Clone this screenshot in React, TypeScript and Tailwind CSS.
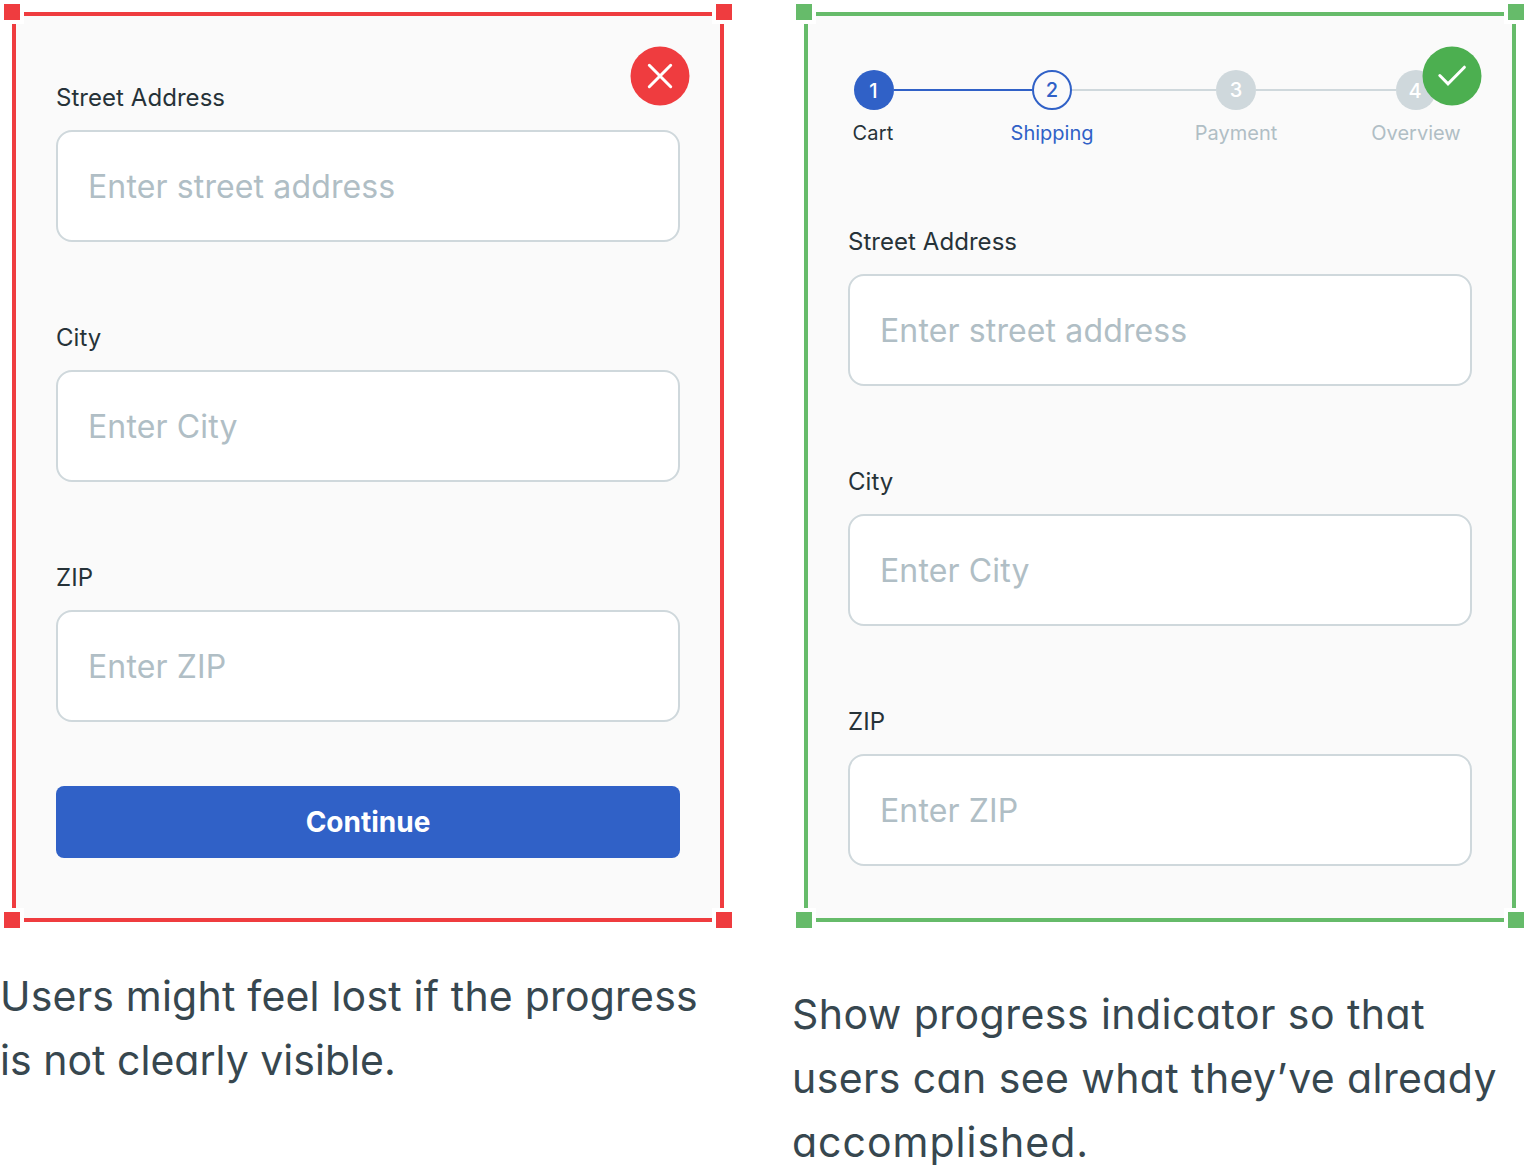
import React from "react";
import { clsx } from "clsx";

type Tone = "bad" | "good";

const fields = [
  { label: "Street Address", placeholder: "Enter street address" },
  { label: "City", placeholder: "Enter City" },
  { label: "ZIP", placeholder: "Enter ZIP" },
];

const handles = ["left-0 top-0", "right-0 top-0", "left-0 bottom-0", "right-0 bottom-0"];

function Frame({ tone, children }: { tone: Tone; children: React.ReactNode }) {
  return (
    <div className="relative h-[932px] w-[736px] px-3 pt-3 pb-2.5">
      <div
        className={clsx(
          "h-full border-4 bg-[#fafafa] px-10",
          tone === "bad" ? "border-[#ef3c3f]" : "border-[#66bb6a]"
        )}
      >
        {children}
      </div>
      {/* Resize handles on the corners */}
      {handles.map((pos) => (
        <span
          key={pos}
          className={clsx(
            "absolute size-6 border-4 border-white",
            pos,
            tone === "bad" ? "bg-[#ef3c3f]" : "bg-[#66bb6a]"
          )}
        />
      ))}
      <Badge tone={tone} />
    </div>
  );
}

function Badge({ tone }: { tone: Tone }) {
  return (
    <svg className="absolute left-[630px] top-[46px] size-[60px]" viewBox="0 0 60 60" fill="none">
      <circle cx="30" cy="30" r="29.5" fill={tone === "bad" ? "#ef3c3f" : "#4caf50"} />
      <path
        d={tone === "bad" ? "M19.3 19.3L40.7 40.7M40.7 19.3L19.3 40.7" : "M17.8 29.5L26 37.8L42.4 21.2"}
        stroke="white"
        strokeWidth="3"
        strokeLinecap="round"
      />
    </svg>
  );
}

function AddressForm() {
  return (
    <div className="flex flex-col gap-20">
      {fields.map((f) => (
        <label key={f.label} className="flex flex-col gap-4">
          <span className="h-8 text-2xl leading-8 tracking-[0.05px] text-[#263238]">{f.label}</span>
          <input
            className="h-28 w-full rounded-2xl border-2 border-[#cfd8dc] bg-white px-[30px] text-[32px] tracking-[0.13px] placeholder:text-[#b0bec5] placeholder:opacity-100"
            placeholder={f.placeholder}
          />
        </label>
      ))}
    </div>
  );
}

function Step({ n, label, circle, text }: { n: number; label: string; circle: string; text: string }) {
  return (
    <div className="flex w-10 shrink-0 flex-col items-center">
      <div className={clsx("flex size-10 items-center justify-center rounded-full text-xl font-medium", circle)}>{n}</div>
      <div className={clsx("mt-2 whitespace-nowrap text-xl leading-7.5", text)}>{label}</div>
    </div>
  );
}

function Stepper() {
  return (
    <div className="flex pl-1.5">
      <Step n={1} label="Cart" circle="bg-[#3061c7] pt-0.5 pr-px text-white" text="mr-0.5 tracking-[0.2px] text-[#263238]" />
      <div className="mt-[19px] h-0.5 w-[138px] bg-[#3061c7]" />
      <Step n={2} label="Shipping" circle="border-2 border-[#3061c7] text-[#3061c7]" text="text-[#3061c7]" />
      <div className="mt-[19px] h-0.5 w-36 bg-[#cfd8dc]" />
      <Step n={3} label="Payment" circle="bg-[#cfd8dc] text-white" text="text-[#b0bec5]" />
      <div className="mt-[19px] h-0.5 w-[140px] bg-[#cfd8dc]" />
      <Step n={4} label="Overview" circle="bg-[#cfd8dc] pt-0.5 pr-0.5 text-white" text="text-[#b0bec5]" />
    </div>
  );
}

export default function App() {
  return (
    <main className="flex h-[1174px] w-[1528px] gap-14 overflow-hidden bg-white font-['Inter',sans-serif]">
      <section className="w-[736px] shrink-0">
        <Frame tone="bad">
          <div className="pt-[66px]">
            <AddressForm />
            <button className="mt-16 h-18 w-full rounded-lg bg-[#3061c7] text-[28px] font-bold text-white">
              Continue
            </button>
          </div>
        </Frame>
        {/* cv11 switches to the single-storey a */}
        <p className="mt-8 whitespace-nowrap text-[41px] leading-16 text-[#37474f] [font-feature-settings:'cv11']">
          <span className="block tracking-[0.2px]">Users might feel lost if the progress</span>
          <span className="block tracking-[0.02px]">is not clearly visible.</span>
        </p>
      </section>

      <section className="w-[736px] shrink-0">
        <Frame tone="good">
          <div className="pt-[54px]">
            <Stepper />
            <div className="pt-[78px]">
              <AddressForm />
            </div>
          </div>
        </Frame>
        <p className="mt-[50px] whitespace-nowrap text-[41px] leading-16 text-[#37474f] [font-feature-settings:'cv11']">
          <span className="block tracking-[0.46px]">Show progress indicator so that</span>
          <span className="block tracking-[0.4px]">users can see what they’ve already</span>
          <span className="block tracking-[1px]">accomplished.</span>
        </p>
      </section>
    </main>
  );
}
